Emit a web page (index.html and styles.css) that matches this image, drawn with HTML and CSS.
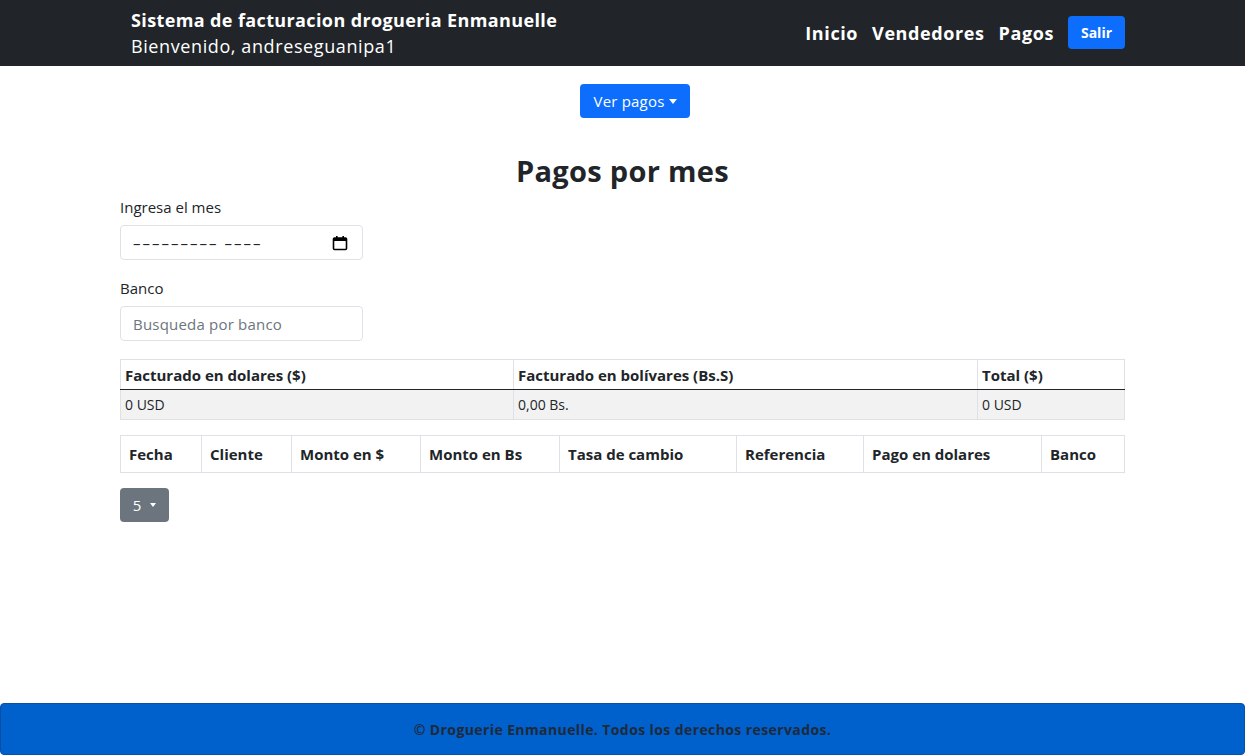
FILE: index.html
```html
<!DOCTYPE html>
<html lang="es">
<head>
<meta charset="utf-8">
<title>Pagos por mes</title>
<link rel="stylesheet" href="styles.css">
</head>
<body>
<header class="topbar">
  <div class="topbar-inner">
    <div class="brand">
      <div class="brand-title">Sistema de facturacion drogueria Enmanuelle</div>
      <div class="brand-user">Bienvenido, andreseguanipa1</div>
    </div>
    <nav class="nav">
      <a class="nav-link" href="#">Inicio</a>
      <a class="nav-link" href="#">Vendedores</a>
      <a class="nav-link" href="#">Pagos</a>
      <button class="btn btn-primary btn-salir">Salir</button>
    </nav>
  </div>
</header>

<main class="main">
  <div class="center-row">
    <button class="btn btn-primary btn-ver">Ver pagos<span class="caret"></span></button>
  </div>

  <h1 class="title">Pagos por mes</h1>

  <div class="field">
    <label class="label">Ingresa el mes</label>
    <div class="input input-date">
      <span class="date-text">––––––––– ––––</span>
      <svg class="cal" width="16" height="16" viewBox="0 0 16 16">
        <rect x="1.5" y="3" width="13" height="11.5" rx="1" fill="none" stroke="#000" stroke-width="1.6"/>
        <rect x="1.5" y="3" width="13" height="3" fill="#000"/>
        <rect x="4" y="1" width="1.6" height="3" fill="#000"/>
        <rect x="10.4" y="1" width="1.6" height="3" fill="#000"/>
      </svg>
    </div>
  </div>

  <div class="field">
    <label class="label">Banco</label>
    <div class="input"><span class="placeholder">Busqueda por banco</span></div>
  </div>

  <table class="tbl summary">
    <colgroup><col style="width:393px"><col style="width:464px"><col></colgroup>
    <thead>
      <tr><th>Facturado en dolares ($)</th><th>Facturado en bolívares (Bs.S)</th><th>Total ($)</th></tr>
    </thead>
    <tbody>
      <tr><td>0 USD</td><td>0,00 Bs.</td><td>0 USD</td></tr>
    </tbody>
  </table>

  <table class="tbl pagos">
    <colgroup>
      <col style="width:81px"><col style="width:90px"><col style="width:129px"><col style="width:139px">
      <col style="width:177px"><col style="width:127px"><col style="width:178px"><col>
    </colgroup>
    <thead>
      <tr><th>Fecha</th><th>Cliente</th><th>Monto en $</th><th>Monto en Bs</th><th>Tasa de cambio</th><th>Referencia</th><th>Pago en dolares</th><th>Banco</th></tr>
    </thead>
  </table>

  <button class="btn btn-secondary btn-five">5<span class="caret caret-sm"></span></button>
</main>

<footer class="footer">© Droguerie Enmanuelle. Todos los derechos reservados.</footer>
</body>
</html>
```

FILE: styles.css
```css
* { box-sizing: border-box; }
html, body { margin: 0; padding: 0; }
body {
  font-family: "Open Sans", "Noto Sans", sans-serif;
  color: #212529;
  background: #fff;
  width: 1245px;
  height: 755px;
  position: relative;
  overflow: hidden;
}
.topbar {
  background: #212529;
  height: 66px;
}
.topbar-inner {
  margin: 0 120px 0 131px;
  height: 66px;
  display: flex;
  align-items: center;
  justify-content: space-between;
}
.brand { color: #fff; padding-top: 1px; }
.brand-title { font-weight: 700; font-size: 18px; line-height: 26px; letter-spacing: 0.38px; }
.brand-user { font-size: 18px; line-height: 27px; letter-spacing: 0.6px; }
.nav { display: flex; align-items: center; }
.nav-link {
  color: #fff;
  text-decoration: none;
  font-weight: 700;
  font-size: 18px;
  letter-spacing: 0.6px;
  margin-right: 14px;
}
.btn {
  border: 0;
  border-radius: 4px;
  color: #fff;
  font-family: inherit;
  cursor: pointer;
  display: inline-flex;
  align-items: center;
  justify-content: center;
}
.btn-primary { background: #0d6efd; }
.btn-secondary { background: #6c757d; }
.btn-salir {
  width: 57px;
  height: 33px;
  font-weight: 700;
  font-size: 14px;
  margin-top: -2px;
}
.main { padding: 18px 120px 0 120px; }
.center-row { display: flex; justify-content: center; padding-left: 25px; }
.btn-ver {
  width: 110px;
  height: 34px;
  font-size: 15px;
  letter-spacing: 0.2px;
}
.caret {
  display: inline-block;
  width: 0; height: 0;
  border-left: 4px solid transparent;
  border-right: 4px solid transparent;
  border-top: 5px solid #fff;
  margin-left: 4px;
}
.caret-sm { margin-left: 9px; border-left-width: 3.5px; border-right-width: 3.5px; border-top-width: 4px; }
.title {
  text-align: center;
  font-size: 29px;
  font-weight: 700;
  margin: 35px 0 0 0;
  line-height: 36px;
  letter-spacing: 0.3px;
}
.field { display: flex; flex-direction: column; margin-bottom: 10px; }
.label { font-size: 15px; line-height: 22px; margin: 7px 0 7px; }
.input {
  width: 243px;
  height: 35px;
  border: 1px solid #dee2e6;
  border-radius: 4px;
  display: flex;
  align-items: center;
  padding: 0 12px;
  font-size: 15px;
}
.input-date { justify-content: space-between; padding-right: 14px; }
.date-text { color: #212529; letter-spacing: 2px; }
.placeholder { color: #6c757d; letter-spacing: 0.2px; }
.tbl {
  width: 1005px;
  border-collapse: collapse;
  table-layout: fixed;
  font-size: 14px;
}
.tbl th, .tbl td {
  border: 1px solid #dee2e6;
  text-align: left;
  padding: 0 4px;
}
.summary { margin-top: 18px; }
.summary th { height: 30px; font-weight: 700; font-size: 15px; border-bottom: 1px solid #212529; }
.summary td { height: 30px; background: #f2f2f2; }
.pagos { margin-top: 15px; font-size: 15px; }
.pagos th { height: 37px; padding: 0 8px; font-weight: 700; }
.btn-five {
  margin-top: 15px;
  width: 49px;
  height: 34px;
  font-size: 15px;
}
.footer {
  position: absolute;
  left: 0; right: 0; bottom: 0;
  height: 52px;
  background: #0060cc;
  border: 1px solid #0a4fa6;
  border-radius: 4px;
  display: flex;
  align-items: center;
  justify-content: center;
  font-size: 14px;
  font-weight: 700;
  letter-spacing: 0.4px;
  color: #1f2a3a;
}
```
